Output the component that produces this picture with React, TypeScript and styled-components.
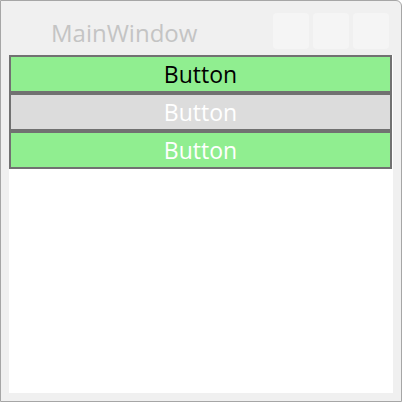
import React from 'react';
import styled, { createGlobalStyle } from 'styled-components';

const GlobalStyle = createGlobalStyle`
  html, body {
    margin: 0;
    padding: 0;
    background: #ffffff;
  }
  body {
    font-family: "Open Sans", "Noto Sans", sans-serif;
  }
`;

const Window = styled.div`
  box-sizing: border-box;
  width: 402px;
  height: 402px;
  border: 1px solid #a6a6a6;
  border-top-right-radius: 6px;
  background: #f0f0f0;
  display: flex;
  flex-direction: column;
`;

const TitleBar = styled.div`
  height: 54px;
  display: flex;
  align-items: flex-start;
  justify-content: space-between;
  padding: 0 12px 0 50px;
`;

const Title = styled.div`
  margin-top: 16px;
  font-size: 24px;
  line-height: 32px;
  color: #c4c4c4;
`;

const CaptionButtons = styled.div`
  display: flex;
  gap: 4px;
  margin-top: 12px;
`;

const CaptionButton = styled.div`
  width: 36px;
  height: 36px;
  border-radius: 4px;
  background: #f5f5f5;
`;

const Content = styled.div`
  flex: 1;
  margin: 0 8px 8px 8px;
  background: #ffffff;
  display: flex;
  flex-direction: column;
  padding-right: 1px;
`;

const PushButton = styled.div<{ $bg: string; $fg: string }>`
  box-sizing: border-box;
  height: 38px;
  border: 2px solid #717171;
  background: ${(p) => p.$bg};
  color: ${(p) => p.$fg};
  font-size: 23px;
  line-height: 34px;
  text-align: center;
`;

const buttons = [
  { bg: '#90ee90', fg: '#000000' },
  { bg: '#dcdcdc', fg: '#ffffff' },
  { bg: '#90ee90', fg: '#ffffff' },
];

const App: React.FC = () => {
  return (
    <>
      <GlobalStyle />
      <Window>
        <TitleBar>
          <Title>MainWindow</Title>
          <CaptionButtons>
            <CaptionButton />
            <CaptionButton />
            <CaptionButton />
          </CaptionButtons>
        </TitleBar>
        <Content>
          {buttons.map((b, i) => (
            <PushButton key={i} $bg={b.bg} $fg={b.fg}>
              Button
            </PushButton>
          ))}
        </Content>
      </Window>
    </>
  );
};

export default App;
